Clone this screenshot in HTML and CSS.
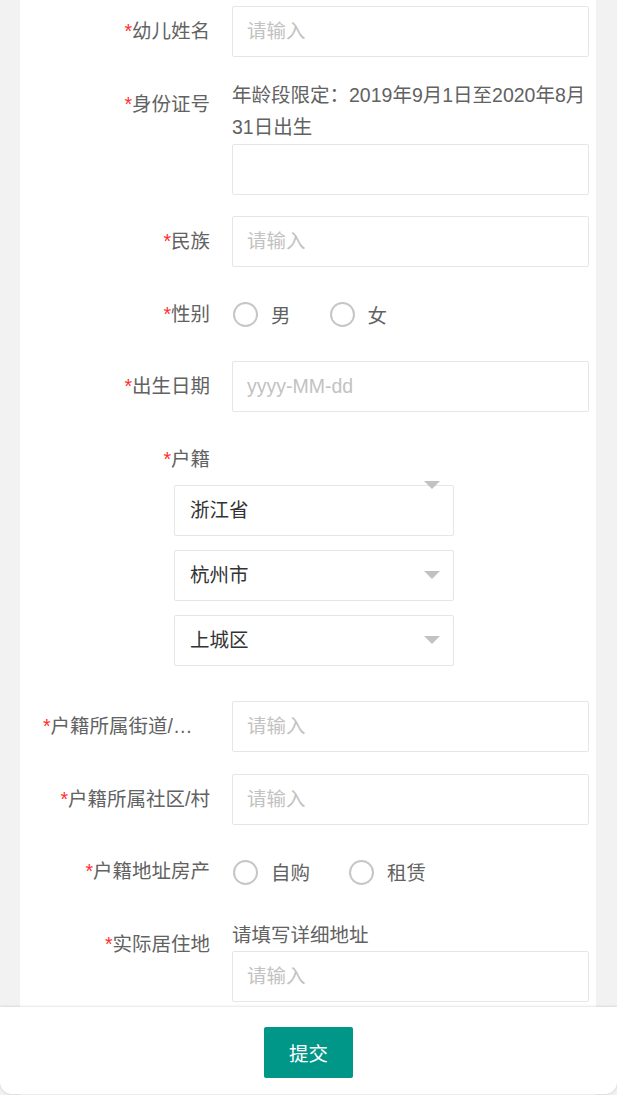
FILE: index.html
```html
<!DOCTYPE html>
<html lang="zh-CN">

<head>
    <meta charset="UTF-8">
    <meta name="viewport" content="width=device-width, initial-scale=1.0">
    <title>幼儿信息登记</title>
    <link rel="stylesheet" href="styles.css">
</head>

<body>
    <form class="form-card">
        <div class="form-item">
            <label class="form-label"><span class="req">*</span>幼儿姓名</label>
            <div class="input-block">
                <input type="text" class="form-input" placeholder="请输入">
            </div>
        </div>

        <div class="form-item">
            <label class="form-label"><span class="req">*</span>身份证号</label>
            <div class="input-block">
                <div class="form-tip">年龄段限定：2019年9月1日至2020年8月31日出生</div>
                <input type="text" class="form-input">
            </div>
        </div>

        <div class="form-item">
            <label class="form-label"><span class="req">*</span>民族</label>
            <div class="input-block">
                <input type="text" class="form-input" placeholder="请输入">
            </div>
        </div>

        <div class="form-item">
            <label class="form-label"><span class="req">*</span>性别</label>
            <div class="input-block radio-group">
                <div class="radio"><span class="radio-icon"></span>男</div>
                <div class="radio"><span class="radio-icon"></span>女</div>
            </div>
        </div>

        <div class="form-item">
            <label class="form-label"><span class="req">*</span>出生日期</label>
            <div class="input-block">
                <input type="text" class="form-input" placeholder="yyyy-MM-dd">
            </div>
        </div>

        <div class="form-item form-item-stack">
            <label class="form-label"><span class="req">*</span>户籍</label>
            <div class="select-list">
                <div class="select select-up">浙江省</div>
                <div class="select">杭州市</div>
                <div class="select">上城区</div>
            </div>
        </div>

        <div class="form-item">
            <label class="form-label"><span class="req">*</span>户籍所属街道/乡镇</label>
            <div class="input-block">
                <input type="text" class="form-input" placeholder="请输入">
            </div>
        </div>

        <div class="form-item">
            <label class="form-label"><span class="req">*</span>户籍所属社区/村</label>
            <div class="input-block">
                <input type="text" class="form-input" placeholder="请输入">
            </div>
        </div>

        <div class="form-item">
            <label class="form-label"><span class="req">*</span>户籍地址房产</label>
            <div class="input-block radio-group">
                <div class="radio"><span class="radio-icon"></span>自购</div>
                <div class="radio"><span class="radio-icon"></span>租赁</div>
            </div>
        </div>

        <div class="form-item">
            <label class="form-label"><span class="req">*</span>实际居住地</label>
            <div class="input-block">
                <div class="form-tip">请填写详细地址</div>
                <input type="text" class="form-input" placeholder="请输入">
            </div>
        </div>
    </form>

    <div class="footer-bar">
        <button type="button" class="submit-button">提交</button>
    </div>
</body>

</html>
```

FILE: styles.css
```css
* {
    margin: 0;
    padding: 0;
    box-sizing: border-box;
}

body {
    font-family: 'Liberation Sans', 'Noto Sans CJK SC', sans-serif;
    font-size: 19.5px;
    color: #626262;
    background: #f2f2f2;
}

.form-card {
    display: block;
    margin: 0 21px 0 20px;
    padding: 6px 7px 110px 0;
    background: white;
}

.form-item {
    display: flex;
    margin-bottom: 21.5px;
}

.form-label {
    flex: 0 0 212px;
    height: 51px;
    padding: 0 22px 0 23px;
    line-height: 51px;
    text-align: right;
    white-space: nowrap;
    overflow: hidden;
    text-overflow: ellipsis;
}

.req {
    color: #ff2d2d;
}

.input-block {
    flex: 1;
    min-width: 0;
}

.form-tip {
    line-height: 32.5px;
}

.form-input {
    display: block;
    width: 100%;
    height: 51px;
    padding: 0 14px;
    border: 1px solid #e6e6e6;
    border-radius: 2px;
    font: inherit;
    color: #333;
    background: white;
    outline: none;
}

.form-input::placeholder {
    color: #c2c2c2;
}

.radio-group {
    display: flex;
    align-items: center;
    height: 51px;
}

.radio {
    display: flex;
    align-items: center;
    gap: 13px;
    margin-right: 38px;
    margin-left: 1px;
}

.radio-icon {
    width: 25px;
    height: 25px;
    margin-top: 1px;
    border: 2px solid #c6c6c6;
    border-radius: 50%;
}

/* 户籍：标签单独一行，下拉框在下方 */
.form-item-stack {
    flex-direction: column;
    align-items: flex-start;
}

.form-item-stack .form-label {
    flex: none;
    width: 212px;
}

.select-list {
    display: flex;
    flex-direction: column;
    gap: 14px;
    width: 279.5px;
    margin: 0 0 14px 154px;
}

.select {
    position: relative;
    height: 51px;
    padding-left: 15px;
    border: 1px solid #e6e6e6;
    border-radius: 2px;
    line-height: 49px;
    color: #333;
}

.select::after {
    content: '';
    position: absolute;
    right: 13px;
    top: 50%;
    margin-top: -4px;
    border-left: 8px solid transparent;
    border-right: 8px solid transparent;
    border-top: 8px solid #c2c2c2;
}

.select-up::after {
    top: -5px;
    margin-top: 0;
}

.footer-bar {
    position: fixed;
    left: 0;
    right: 0;
    bottom: 1px;
    height: 87px;
    padding-top: 20px;
    display: flex;
    justify-content: center;
    align-items: flex-start;
    background: white;
    border-radius: 0 0 12px 12px;
    box-shadow: 0 0 3px rgba(0, 0, 0, 0.2);
}

.submit-button {
    width: 89px;
    height: 51px;
    border: none;
    border-radius: 2px;
    background: #009688;
    color: white;
    font: inherit;
    cursor: pointer;
}
```
